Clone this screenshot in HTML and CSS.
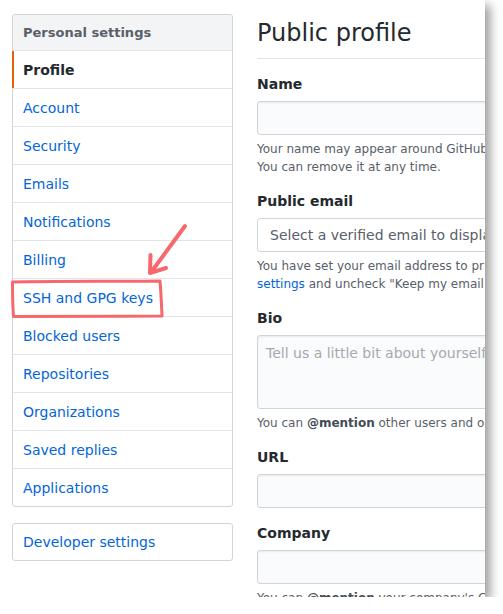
FILE: index.html
```html
<!DOCTYPE html>
<html>
<head>
<meta charset="utf-8">
<link rel="stylesheet" href="styles.css">
</head>
<body>
<div class="frame">
  <div class="layout">
    <nav class="sidebar">
      <div class="menu">
        <div class="menu-heading">Personal settings</div>
        <a class="menu-item selected">Profile</a>
        <a class="menu-item">Account</a>
        <a class="menu-item">Security</a>
        <a class="menu-item">Emails</a>
        <a class="menu-item">Notifications</a>
        <a class="menu-item">Billing</a>
        <a class="menu-item">SSH and GPG keys</a>
        <a class="menu-item">Blocked users</a>
        <a class="menu-item">Repositories</a>
        <a class="menu-item">Organizations</a>
        <a class="menu-item">Saved replies</a>
        <a class="menu-item">Applications</a>
      </div>
      <div class="menu dev">
        <a class="menu-item">Developer settings</a>
      </div>
    </nav>
    <main class="main">
      <h2 class="subhead">Public profile</h2>
      <div class="group">
        <label class="label">Name</label>
        <div class="input"></div>
        <p class="note">Your name may appear around GitHub where you contribute or are mentioned.<br>You can remove it at any time.</p>
      </div>
      <div class="group">
        <label class="label">Public email</label>
        <div class="input select">Select a verified email to display</div>
        <p class="note">You have set your email address to private. To toggle email privacy, go to <a class="link">email<br>settings</a> and uncheck "Keep my email address private."</p>
      </div>
      <div class="group">
        <label class="label">Bio</label>
        <div class="input textarea">Tell us a little bit about yourself</div>
        <p class="note">You can <strong>@mention</strong> other users and organizations to link to them.</p>
      </div>
      <div class="group">
        <label class="label">URL</label>
        <div class="input"></div>
      </div>
      <div class="group">
        <label class="label">Company</label>
        <div class="input"></div>
        <p class="note">You can <strong>@mention</strong> your company's GitHub organization to link it.</p>
      </div>
    </main>
  </div>
  <svg class="annotation" width="485" height="597" viewBox="0 0 485 597">
    <path d="M12.5 282 C 50 281, 110 281.5, 160 281 C 161 292, 161.5 304, 162 316 C 110 316.5, 50 316.5, 13.5 316.5 C 12.5 305, 12.5 293, 12.5 282 Z" fill="none" stroke="#f6686d" stroke-width="3" stroke-linejoin="round"/>
    <path d="M185 226 L152 271" fill="none" stroke="#f6686d" stroke-width="4" stroke-linecap="round"/>
    <path d="M150.5 255 L150 273 L166 268" fill="none" stroke="#f6686d" stroke-width="4" stroke-linecap="round" stroke-linejoin="round"/>
  </svg>
</div>
</body>
</html>
```
FILE: styles.css
```css
* { box-sizing: border-box; }
html, body {
  margin: 0;
  padding: 0;
  background: #ffffff;
}
body {
  font-family: "DejaVu Sans", Verdana, sans-serif;
  font-size: 14px;
  color: #24292e;
}
.frame {
  position: relative;
  width: 485px;
  height: 597px;
  overflow: hidden;
  background: #ffffff;
  box-shadow: 5px 5px 10px rgba(0, 0, 0, 0.4);
}
.layout {
  display: flex;
  gap: 24px;
  padding: 14px 0 0 12px;
}
.sidebar {
  flex: 0 0 221px;
  display: flex;
  flex-direction: column;
  gap: 16px;
}
.menu {
  border: 1px solid #d1d5da;
  border-radius: 3px;
  background: #fff;
  display: flex;
  flex-direction: column;
}
.menu-heading {
  height: 36px;
  padding: 0 10px;
  display: flex;
  align-items: center;
  font-size: 13px;
  font-weight: bold;
  color: #586069;
  background: #f3f4f6;
  border-bottom: 1px solid #e1e4e8;
  border-radius: 3px 3px 0 0;
}
.menu-item {
  height: 38px;
  padding: 0 10px;
  display: flex;
  align-items: center;
  color: #0366d6;
  border-bottom: 1px solid #e1e4e8;
  text-decoration: none;
}
.menu-item:last-child {
  border-bottom: 0;
  height: 37px;
}
.menu-item.selected {
  color: #24292e;
  font-weight: bold;
  box-shadow: inset 2px 0 0 #e36209;
  margin-left: -1px;
  padding-left: 11px;
}
.dev .menu-item {
  height: 36px;
}
.main {
  flex: 0 0 440px;
}
.subhead {
  margin: 0 0 15px;
  font-size: 24px;
  font-weight: normal;
  line-height: 38px;
  padding-bottom: 6px;
  border-bottom: 1px solid #e1e4e8;
  width: 228px;
  white-space: nowrap;
}
.group {
  margin-bottom: 15px;
}
.label {
  display: block;
  font-weight: bold;
  line-height: 21px;
  margin-bottom: 6px;
}
.input {
  height: 34px;
  border: 1px solid #d1d5da;
  border-radius: 3px;
  background: #fafbfc;
  box-shadow: inset 0 1px 2px rgba(27, 31, 35, 0.075);
}
.select {
  background: #fff;
  box-shadow: none;
  color: #586069;
  padding: 0 12px;
  display: flex;
  align-items: center;
  white-space: nowrap;
}
.textarea {
  height: 74px;
  padding: 8px 8px;
  line-height: 18px;
  color: #a3aab1;
  white-space: nowrap;
}
.note {
  margin: 5px 0 0;
  font-size: 12px;
  line-height: 18px;
  color: #586069;
  white-space: nowrap;
}
.note strong {
  color: #444d56;
}
.link {
  color: #0366d6;
  text-decoration: none;
}
.annotation {
  position: absolute;
  left: 0;
  top: 0;
  pointer-events: none;
}
```
